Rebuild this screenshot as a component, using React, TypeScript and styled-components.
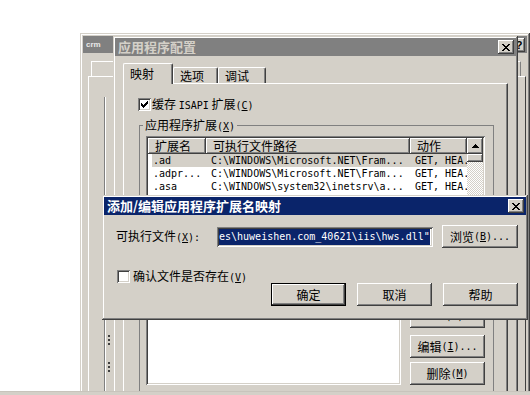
import styled, { createGlobalStyle } from "styled-components";

const FACE = "#d4d0c8";
const raised = `box-shadow: inset -1px -1px #404040, inset 1px 1px #fff, inset -2px -2px #808080, inset 2px 2px ${FACE};`;
const sunken = `box-shadow: inset 1px 1px #808080, inset -1px -1px #fff, inset 2px 2px #404040, inset -2px -2px ${FACE};`;

const GlobalStyle = createGlobalStyle`
  html, body { margin: 0; padding: 0; background: #fff; }
  body {
    font-family: "Noto Sans CJK SC", "Liberation Sans", sans-serif;
    font-size: 12px;
    line-height: 14px;
    color: #000;
  }
  * { box-sizing: border-box; }
`;

// pixel glyphs, one string per row
const CLOSE_X = ["xx....xx", ".xx..xx.", "..xxxx..", "...xx...", "..xxxx..", ".xx..xx.", "xx....xx"];
const CHECK = ["......x", ".....xx", "x...xxx", "xx.xxx.", "xxxxx..", ".xxx...", "..x...."];
const ARROW_UP = ["...x...", "..xxx..", ".xxxxx.", "xxxxxxx"];
const ARROW_DOWN = [...ARROW_UP].reverse();

function Pixels({ rows }: { rows: string[] }) {
  return (
    <svg width={rows[0].length} height={rows.length} shapeRendering="crispEdges">
      {rows.flatMap((r, y) =>
        r.split("").map((c, x) => (c === "x" ? <rect key={`${x}-${y}`} x={x} y={y} width={1} height={1} fill="#000" /> : null))
      )}
    </svg>
  );
}

const Desktop = styled.div`
  width: 530px;
  height: 395px;
  display: flex;
  flex-direction: column;
  overflow: hidden;
  background: #fff;
`;

const Area = styled.div`
  position: relative;
  flex: 1;
  overflow: hidden;
`;

const Taskbar = styled.div`
  flex: none;
  height: 4px;
  background: ${FACE};
  box-shadow: inset 0 1px #c8c4bc;
`;

const Window = styled.div<{ $x: number; $y: number; $w: number; $h: number; $pad?: number }>`
  position: absolute;
  left: ${(p) => p.$x}px;
  top: ${(p) => p.$y}px;
  width: ${(p) => p.$w}px;
  height: ${(p) => p.$h}px;
  padding: ${(p) => p.$pad ?? 2}px;
  display: flex;
  flex-direction: column;
  background: ${FACE};
  box-shadow: inset -1px -1px #404040, inset 1px 1px ${FACE}, inset -2px -2px #808080, inset 2px 2px #fff;
`;

const TitleBar = styled.div<{ $active?: boolean; $h?: number }>`
  flex: none;
  height: ${(p) => p.$h ?? 18}px;
  display: flex;
  align-items: center;
  padding: 0 2px 0 3px;
  background: ${(p) => (p.$active ? "#0a246a" : "#808080")};
  color: ${(p) => (p.$active ? "#fff" : FACE)};
`;

const TitleText = styled.span`
  flex: 1;
  min-width: 0;
  white-space: nowrap;
  overflow: hidden;
  font-weight: bold;
  font-size: 13px;
  line-height: 16px;
`;

const SmallTitleText = styled(TitleText)`
  font-family: "Liberation Sans", sans-serif;
  font-size: 8px;
  line-height: 10px;
  color: #e8e8e8;
`;

const CaptionButton = styled.div`
  flex: none;
  width: 16px;
  height: 14px;
  display: flex;
  align-items: center;
  justify-content: center;
  background: ${FACE};
  color: #000;
  font-family: "Liberation Sans", sans-serif;
  font-weight: bold;
  font-size: 11px;
  ${raised}
`;

const HelpButton = styled(CaptionButton)`
  width: 12px;
`;

/* back window (crm) */
const BackBody = styled.div`
  flex: 1;
  display: flex;
  flex-direction: column;
  padding: 8px 1px 0 5px;
`;

const BackTabs = styled.div`
  flex: none;
  display: flex;
  height: 15px;
  padding-left: 3px;
`;

const BackTab = styled.div`
  width: 86px;
  border-top: 1px solid #fff;
  border-left: 1px solid #fff;
  border-right: 1px solid #808080;
`;

const BackPanel = styled.div`
  flex: 1;
  display: flex;
  border-top: 1px solid #fff;
  border-left: 1px solid #fff;
  border-right: 1px solid #404040;
  padding: 20px 0 0 15px;
`;

const BackInner = styled.div`
  flex: 1;
  display: flex;
  flex-direction: column;
  gap: 17px;
  padding: 238px 0 0 3px;
  border-left: 1px solid #808080;
  box-shadow: inset 1px 0 #fff;
`;

const Dots = styled.span`
  width: 2px;
  height: 10px;
  background: repeating-linear-gradient(to bottom, #404040 0 2px, transparent 2px 4px);
`;

/* middle window (应用程序配置) */
const MidBody = styled.div`
  flex: 1;
  min-height: 0;
  display: flex;
  flex-direction: column;
  padding: 7px 8px 0 8px;
`;

const TabStrip = styled.div`
  flex: none;
  height: 20px;
  display: flex;
  align-items: flex-end;
  position: relative;
  z-index: 1;
`;

const Tab = styled.div<{ $active?: boolean; $w: number }>`
  flex: none;
  width: ${(p) => p.$w}px;
  height: ${(p) => (p.$active ? 21 : 16)}px;
  margin-bottom: ${(p) => (p.$active ? -1 : 0)}px;
  padding-left: 6px;
  display: flex;
  align-items: center;
  background: ${FACE};
  border-top: 1px solid #fff;
  border-left: 1px solid #fff;
  border-right: 1px solid #404040;
  border-radius: 2px 2px 0 0;
  box-shadow: inset -1px 0 #808080;
`;

const TabPanel = styled.div`
  flex: 1;
  min-height: 0;
  display: flex;
  flex-direction: column;
  padding: 14px 13px 0 14px;
  border-top: 1px solid #fff;
  border-left: 1px solid #fff;
  border-right: 1px solid #404040;
  box-shadow: inset -1px 0 #808080;
`;

const CheckRow = styled.label<{ $gap: number }>`
  flex: none;
  height: 13px;
  display: flex;
  align-items: center;
  gap: ${(p) => p.$gap}px;
  white-space: nowrap;
`;

const CheckBox = styled.span`
  flex: none;
  width: 13px;
  height: 13px;
  display: flex;
  align-items: center;
  justify-content: center;
  background: #fff;
  ${sunken}
`;

const Asc = styled.span`
  font-family: "DejaVu Sans Mono", "Liberation Mono", monospace;
  font-size: 10px;
`;

const GroupBox = styled.fieldset`
  flex: 1;
  min-height: 0;
  min-width: 0;
  display: flex;
  flex-direction: column;
  margin: 7px 0 0 1px;
  padding: 3px 8px 0 6px;
  border: 1px solid #808080;
`;

const Legend = styled.legend`
  padding: 0 2px;
  margin-left: -3px;
  font-size: 12px;
  line-height: 13px;
`;

const ListView = styled.div`
  flex: none;
  height: 116px;
  display: flex;
  padding: 2px;
  background: #fff;
  ${sunken}
`;

const ListMain = styled.div`
  flex: 1;
  min-width: 0;
  display: flex;
  flex-direction: column;
  overflow: hidden;
`;

const Columns = styled.div`
  display: grid;
  grid-template-columns: 58px 204px 1fr;
`;

const HeaderRow = styled(Columns)`
  flex: none;
  height: 16px;
`;

const HeaderCell = styled.div`
  padding-left: 7px;
  line-height: 16px;
  white-space: nowrap;
  overflow: hidden;
  background: ${FACE};
  ${raised}
`;

const ListRow = styled(Columns)<{ $selected?: boolean }>`
  flex: none;
  height: 13px;
  background: ${(p) => (p.$selected ? `linear-gradient(to right, transparent 4px, ${FACE} 4px)` : "transparent")};
`;

const Cell = styled.div`
  padding-left: 5px;
  font-family: "DejaVu Sans Mono", "Liberation Mono", monospace;
  font-size: 10px;
  line-height: 13px;
  white-space: pre;
  overflow: hidden;
`;

const ScrollBar = styled.div`
  flex: none;
  width: 16px;
  display: flex;
  flex-direction: column;
`;

const ScrollButton = styled.div`
  flex: none;
  height: 16px;
  display: flex;
  align-items: center;
  justify-content: center;
  background: ${FACE};
  ${raised}
`;

const Thumb = styled.div`
  flex: none;
  height: 8px;
  background: ${FACE};
  ${raised}
`;

const Track = styled.div`
  flex: 1;
  background: repeating-conic-gradient(${FACE} 0 25%, #fff 0 50%) 0 0 / 2px 2px;
`;

const Button = styled.button<{ $default?: boolean; $w?: number }>`
  flex: none;
  width: ${(p) => p.$w ?? 75}px;
  height: 23px;
  padding: 0;
  display: flex;
  align-items: center;
  justify-content: center;
  font: inherit;
  color: #000;
  white-space: nowrap;
  background: ${FACE};
  border: ${(p) => (p.$default ? "1px solid #000" : "none")};
  ${raised}
`;

const BrowseButton = styled(Button)`
  margin-left: 9px;
`;

const ButtonRow = styled.div`
  flex: none;
  display: flex;
  justify-content: flex-end;
  gap: 6px;
  margin-top: 6px;
`;

const LowerRow = styled.div`
  flex: none;
  height: 96px;
  display: flex;
  gap: 9px;
  margin-top: 8px;
`;

const LowerList = styled.div`
  flex: 1;
  background: #fff;
  ${sunken}
`;

const ButtonColumn = styled.div`
  flex: none;
  width: 75px;
  display: flex;
  flex-direction: column;
  justify-content: flex-end;
  gap: 4px;
`;

const InsertButton = styled(Button)`
  margin-bottom: 3px;
  padding-bottom: 6px;
`;

/* front dialog */
const DialogBody = styled.div`
  flex: 1;
  display: flex;
  flex-direction: column;
  padding: 10px 8px 0 12px;
`;

const FieldRow = styled.div`
  flex: none;
  height: 23px;
  display: flex;
  align-items: center;
`;

const FieldLabel = styled.span`
  flex: none;
  width: 101px;
  white-space: nowrap;
`;

const TextBox = styled.div`
  flex: none;
  width: 216px;
  height: 20px;
  padding: 2px;
  display: flex;
  align-items: center;
  overflow: hidden;
  background: #fff;
  ${sunken}
`;

const Selected = styled.span`
  background: #0a246a;
  color: #fff;
  font-family: "DejaVu Sans Mono", "Liberation Mono", monospace;
  font-size: 10px;
  line-height: 16px;
  white-space: pre;
`;

const DialogCheck = styled(CheckRow)`
  margin: 22px 0 0 1px;
`;

const ActionRow = styled.div`
  flex: none;
  display: flex;
  justify-content: flex-end;
  gap: 11px;
`;

const rows = [
  [".ad", "C:\\WINDOWS\\Microsoft.NET\\Fram...", "GET, HEA.."],
  [".adpr...", "C:\\WINDOWS\\Microsoft.NET\\Fram...", "GET, HEA.."],
  [".asa", "C:\\WINDOWS\\system32\\inetsrv\\a...", "GET, HEA.."],
  [".asax", "C:\\WINDOWS\\Microsoft.NET\\Fram...", "GET, HEA.."],
  [".ascx", "C:\\WINDOWS\\Microsoft.NET\\Fram...", "GET, HEA.."],
  [".ashx", "C:\\WINDOWS\\Microsoft.NET\\Fram...", "GET, HEA.."],
  [".asmx", "C:\\WINDOWS\\Microsoft.NET\\Fram...", "GET, HEA.."],
];

const Close = () => (
  <CaptionButton>
    <Pixels rows={CLOSE_X} />
  </CaptionButton>
);

export default function App() {
  return (
    <>
      <GlobalStyle />
      <Desktop>
        <Area>
          <Window $x={80} $y={33} $w={450} $h={370} $pad={3}>
            <TitleBar $h={17}>
              <SmallTitleText>crm</SmallTitleText>
              <HelpButton>?</HelpButton>
            </TitleBar>
            <BackBody>
              <BackTabs>
                {[0, 1, 2, 3, 4].map((i) => (
                  <BackTab key={i} />
                ))}
              </BackTabs>
              <BackPanel>
                <BackInner>
                  <Dots />
                  <Dots />
                </BackInner>
              </BackPanel>
            </BackBody>
          </Window>

          <Window $x={113} $y={36} $w={405} $h={362}>
            <TitleBar>
              <TitleText>应用程序配置</TitleText>
              <Close />
            </TitleBar>
            <MidBody>
              <TabStrip>
                <Tab $active $w={50}>映射</Tab>
                <Tab $w={45}>选项</Tab>
                <Tab $w={48}>调试</Tab>
              </TabStrip>
              <TabPanel>
                <CheckRow $gap={1}>
                  <CheckBox>
                    <Pixels rows={CHECK} />
                  </CheckBox>
                  <span>
                    缓存 <Asc>ISAPI</Asc> 扩展<Asc>(<u>C</u>)</Asc>
                  </span>
                </CheckRow>
                <GroupBox>
                  <Legend>
                    应用程序扩展<Asc>(<u>X</u>)</Asc>
                  </Legend>
                  <ListView>
                    <ListMain>
                      <HeaderRow>
                        <HeaderCell>扩展名</HeaderCell>
                        <HeaderCell>可执行文件路径</HeaderCell>
                        <HeaderCell>动作</HeaderCell>
                      </HeaderRow>
                      {rows.map((r, i) => (
                        <ListRow key={r[0]} $selected={i === 0}>
                          <Cell>{r[0]}</Cell>
                          <Cell>{r[1]}</Cell>
                          <Cell>{r[2]}</Cell>
                        </ListRow>
                      ))}
                    </ListMain>
                    <ScrollBar>
                      <ScrollButton>
                        <Pixels rows={ARROW_UP} />
                      </ScrollButton>
                      <Thumb />
                      <Track />
                      <ScrollButton>
                        <Pixels rows={ARROW_DOWN} />
                      </ScrollButton>
                    </ScrollBar>
                  </ListView>
                  <ButtonRow>
                    <Button>添加(D)...</Button>
                    <Button>编辑(E)...</Button>
                    <Button>删除(R)</Button>
                  </ButtonRow>
                  <LowerRow>
                    <LowerList />
                    <ButtonColumn>
                      <InsertButton>插入(N)...</InsertButton>
                      <Button>
                        编辑<Asc>(<u>I</u>)...</Asc>
                      </Button>
                      <Button>
                        删除<Asc>(<u>M</u>)</Asc>
                      </Button>
                    </ButtonColumn>
                  </LowerRow>
                </GroupBox>
              </TabPanel>
            </MidBody>
          </Window>

          <Window $x={102} $y={195} $w={426} $h={125}>
            <TitleBar $active>
              <TitleText>添加/编辑应用程序扩展名映射</TitleText>
              <Close />
            </TitleBar>
            <DialogBody>
              <FieldRow>
                <FieldLabel>
                  可执行文件<Asc>(<u>X</u>):</Asc>
                </FieldLabel>
                <TextBox>
                  <Selected>{'es\\huweishen.com_40621\\iis\\hws.dll"'}</Selected>
                </TextBox>
                <BrowseButton $w={76}>
                  浏览<Asc>(<u>B</u>)...</Asc>
                </BrowseButton>
              </FieldRow>
              <DialogCheck $gap={3}>
                <CheckBox />
                <span>
                  确认文件是否存在<Asc>(<u>V</u>)</Asc>
                </span>
              </DialogCheck>
              <ActionRow>
                <Button $default>确定</Button>
                <Button>取消</Button>
                <Button>帮助</Button>
              </ActionRow>
            </DialogBody>
          </Window>
        </Area>
        <Taskbar />
      </Desktop>
    </>
  );
}
